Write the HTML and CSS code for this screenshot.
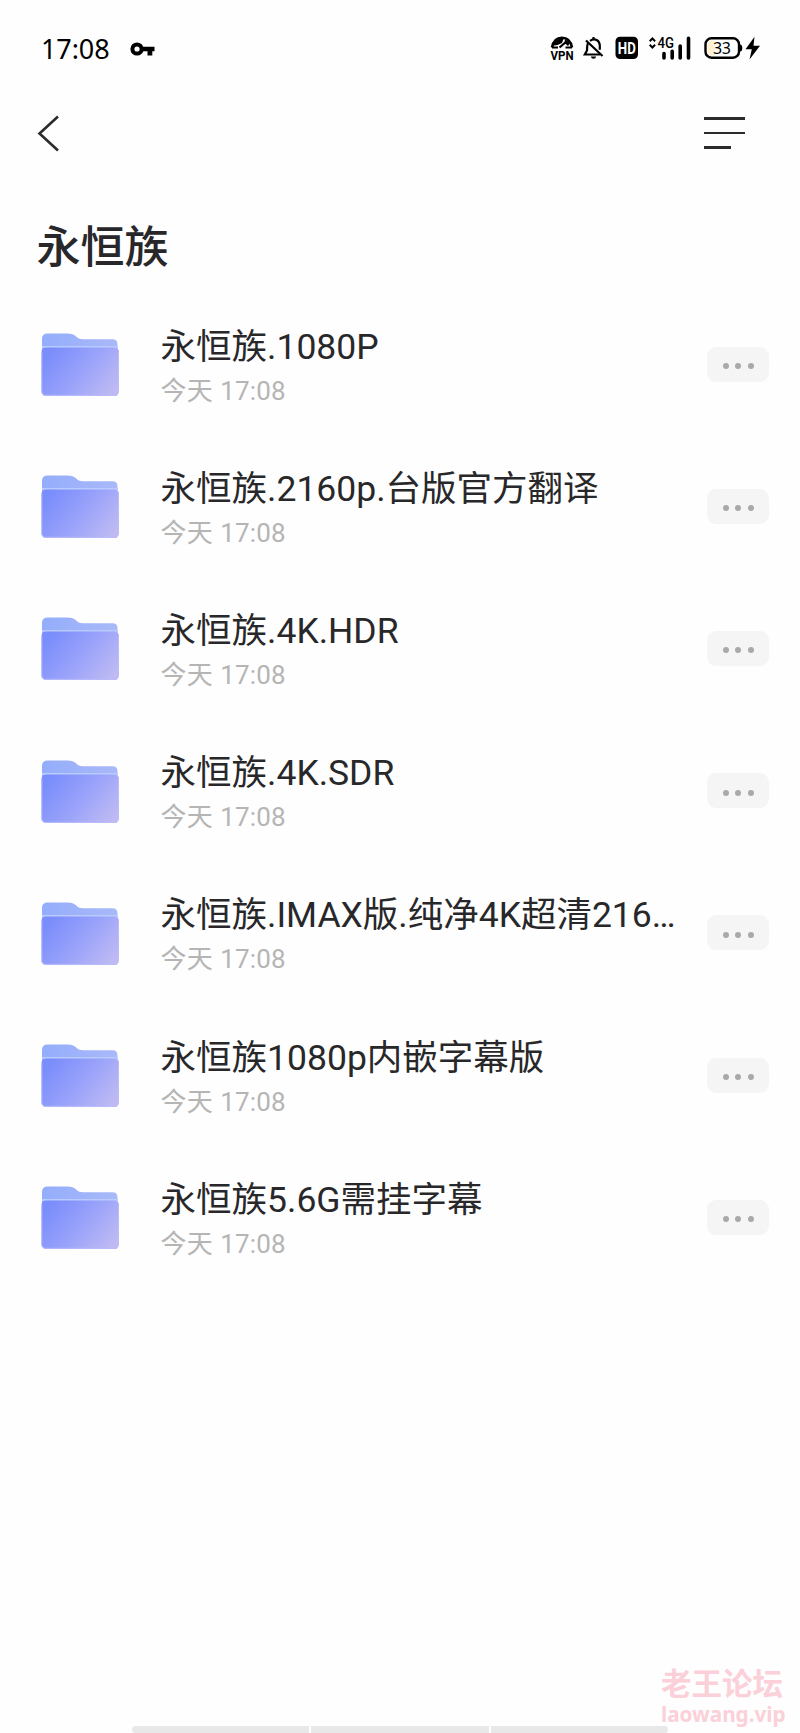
FILE: index.html
```html
<!DOCTYPE html>
<html lang="zh-CN">
  <head>
    <meta charset="UTF-8" />
    <title>永恒族</title>
    <link rel="stylesheet" href="styles.css">
  </head>
  <body>
    <!-- shared folder icon -->
    <svg class="defs" width="0" height="0">
      <defs>
        <linearGradient id="back" x1="0" y1="0" x2="1" y2="0">
          <stop offset="0" stop-color="#94adfb" />
          <stop offset="1" stop-color="#a9b9f9" />
        </linearGradient>
        <linearGradient id="front" x1="0" y1="0.3" x2="1" y2="0.8">
          <stop offset="0" stop-color="#7a8dfc" />
          <stop offset="0.5" stop-color="#9aa3fa" />
          <stop offset="1" stop-color="#bfbaf3" />
        </linearGradient>
        <symbol id="folder" viewBox="0 0 80 66">
          <path d="M2 7q0-5.500 5.500-5.500h20c4 0 6.500 1 9 3.200 2 1.800 3.500 2.500 6.500 2.500h29.500q5 0 5 5V50H2z" fill="url(#back)" />
          <rect x="2" y="14" width="76" height="2" fill="#b9caff" />
          <rect x="1.500" y="15.500" width="77.500" height="48.500" rx="4.500" fill="url(#front)" />
          <path d="M4 63q-2-.8-2.200-3v-40M4 63.300h73M78.500 20v40" fill="none" stroke="#b9bcfb" stroke-width="1" />
        </symbol>
      </defs>
    </svg>

    <div class="status-bar">
      <span class="clock">17:08</span>
      <svg class="key" width="26" height="16" viewBox="0 0 26 16">
        <circle cx="7" cy="8" r="4.600" fill="none" stroke="#000" stroke-width="4" />
        <path d="M12 5.800h12.500v4.400h-2.200v4.300h-4.800v-4.300H12z" />
      </svg>
      <svg class="status-icons" width="212" height="30" viewBox="0 0 212 30">
        <!-- vpn -->
        <path d="M2 13.500C3.500 6 7.500 3.800 12 3.800S20.500 6 22 13.500" fill="none" stroke="#000" stroke-width="2.600" />
        <path d="M3 9.500l7-5.500 3.500 1-1.500 4-4.500 2-3.500.5zM15 5l5 4-2 3-3.500-3z" />
        <path d="M2 13.500h6M15.500 13.500h6.500" stroke="#000" stroke-width="2" />
        <path d="M9.500 13.500l7-6" stroke="#000" stroke-width="2.300" />
        <text x="12" y="25.500" class="vpn-text" textLength="23" lengthAdjust="spacingAndGlyphs">VPN</text>
        <!-- muted bell -->
        <g fill="none" stroke="#000" stroke-width="2.200">
          <path d="M38.500 8.500C36.800 10.200 37.200 14 37 16.500L34.800 20.500H50M40 6.800c5-3.500 9.500 0 9.800 4.500v4.500" />
          <path d="M36 6.500L52.500 22M43.500 3v2.500" />
        </g>
        <path d="M40.800 22.500h5.400q-.6 2.300-2.700 2.300t-2.700-2.300z" />
        <!-- hd -->
        <rect x="65.500" y="2.800" width="22.500" height="22.200" rx="4.500" />
        <text x="76.800" y="19.600" class="hd-text" textLength="18" lengthAdjust="spacingAndGlyphs">HD</text>
        <!-- signal -->
        <path d="M99.700 7.200l2.700-2.700 2.700 2.700M99.700 10.800l2.700 2.700 2.700-2.700" fill="none" stroke="#000" stroke-width="2" />
        <text x="115.800" y="14" class="net-text" textLength="16.500" lengthAdjust="spacingAndGlyphs">4G</text>
        <path d="M114 19.500v4.500M122.200 17.300v6.700M130.200 12v12M138.500 4.300v19.700" fill="none" stroke="#000" stroke-width="3.600" stroke-linecap="round" />
        <!-- battery -->
        <rect x="155.500" y="4.300" width="33.500" height="19.400" rx="6" fill="#fff" stroke="#000" stroke-width="2.400" />
        <path d="M162 6.500q-4.300 0-4.300 4.300v6.400q0 4.300 4.300 4.300h3v-15z" fill="#fff1d2" />
        <path d="M190 10.500q2.300 0 2.300 3.500t-2.300 3.500z" />
        <text x="172" y="19.700" class="battery-text" textLength="18">33</text>
        <path d="M204.500 2.800L195.500 15.300h6.300L199.500 25.500 210 11.700h-6.500z" />
      </svg>
    </div>

    <div class="nav-bar">
      <svg width="24" height="38" viewBox="0 0 24 38">
        <path d="M22 2.500L3.500 19.500 22 36.500" fill="none" stroke="#2b2b2d" stroke-width="2.600" />
      </svg>
      <div class="menu">
        <span></span>
        <span></span>
        <span class="short"></span>
      </div>
    </div>

    <h1>永恒族</h1>

    <div class="file-list">
      <div class="file-row">
        <svg class="folder"><use href="#folder" /></svg>
        <div class="info">
          <div class="name">永恒族.1080P</div>
          <div class="time">今天 17:08</div>
        </div>
        <div class="more"><i></i><i></i><i></i></div>
      </div>
      <div class="file-row">
        <svg class="folder"><use href="#folder" /></svg>
        <div class="info">
          <div class="name">永恒族.2160p.台版官方翻译</div>
          <div class="time">今天 17:08</div>
        </div>
        <div class="more"><i></i><i></i><i></i></div>
      </div>
      <div class="file-row">
        <svg class="folder"><use href="#folder" /></svg>
        <div class="info">
          <div class="name">永恒族.4K.HDR</div>
          <div class="time">今天 17:08</div>
        </div>
        <div class="more"><i></i><i></i><i></i></div>
      </div>
      <div class="file-row">
        <svg class="folder"><use href="#folder" /></svg>
        <div class="info">
          <div class="name">永恒族.4K.SDR</div>
          <div class="time">今天 17:08</div>
        </div>
        <div class="more"><i></i><i></i><i></i></div>
      </div>
      <div class="file-row">
        <svg class="folder"><use href="#folder" /></svg>
        <div class="info">
          <div class="name">永恒族.IMAX版.纯净4K超清216…</div>
          <div class="time">今天 17:08</div>
        </div>
        <div class="more"><i></i><i></i><i></i></div>
      </div>
      <div class="file-row">
        <svg class="folder"><use href="#folder" /></svg>
        <div class="info">
          <div class="name">永恒族1080p内嵌字幕版</div>
          <div class="time">今天 17:08</div>
        </div>
        <div class="more"><i></i><i></i><i></i></div>
      </div>
      <div class="file-row">
        <svg class="folder"><use href="#folder" /></svg>
        <div class="info">
          <div class="name">永恒族5.6G需挂字幕</div>
          <div class="time">今天 17:08</div>
        </div>
        <div class="more"><i></i><i></i><i></i></div>
      </div>
    </div>

    <div class="gesture-bar">
      <span></span>
      <span></span>
      <span></span>
    </div>

    <div class="watermark">
      <div class="site-name">老王论坛</div>
      <div class="site-url">laowang.vip</div>
    </div>
  </body>
</html>
```
FILE: styles.css
```css
* {
  box-sizing: border-box;
}

body {
  margin: 0;
  position: relative;
  width: 800px;
  height: 1733px;
  display: flex;
  flex-direction: column;
  overflow: hidden;
  background: #fefefe;
  color: #28282a;
  font-family: Roboto, "Noto Sans CJK SC", sans-serif;
}

svg {
  display: block;
}

.defs {
  position: absolute;
}

.status-bar {
  height: 98px;
  padding: 0 38px 0 41px;
  display: flex;
  align-items: center;
  color: #000;
}

.clock {
  font-family: "Noto Sans", sans-serif;
  font-size: 27px;
  line-height: 38px;
  letter-spacing: -0.1px;
}

.key {
  margin-left: 20px;
}

.status-icons {
  margin-left: auto;
}

.status-icons text {
  font-family: Roboto, sans-serif;
  text-anchor: middle;
}

.status-icons .vpn-text {
  font-size: 13.5px;
  font-weight: 700;
}

.status-icons .hd-text {
  font-size: 16.5px;
  font-weight: 700;
  fill: #fff;
}

.status-icons .net-text {
  font-size: 15px;
  font-weight: 500;
}

.status-icons .battery-text {
  font-family: "Noto Sans", sans-serif;
  font-size: 16px;
}

.nav-bar {
  height: 70px;
  padding: 0 55px 0 36px;
  display: flex;
  align-items: center;
  justify-content: space-between;
}

.menu {
  display: flex;
  flex-direction: column;
  gap: 12px;
}

.menu span {
  width: 41px;
  height: 2.5px;
  background: #2b2b2d;
}

.menu .short {
  width: 27px;
}

h1 {
  margin: 48px 0 0 36.5px;
  font-size: 44px;
  font-weight: 500;
  line-height: 64px;
}

.file-list {
  flex: 1;
  padding-top: 13px;
}

.file-row {
  height: 142.2px;
  padding: 0 31px 0 40px;
  display: flex;
  align-items: center;
}

.folder {
  width: 80px;
  height: 66px;
  margin-top: 2px;
}

.info {
  flex: 1;
  margin-left: 40.6px;
  padding-top: 5px;
  white-space: nowrap;
}

.name {
  font-size: 35.5px;
  line-height: 48px;
}

.time {
  font-size: 26px;
  line-height: 40px;
  letter-spacing: 0.1px;
  word-spacing: 1px;
  color: #b5b5b5;
}

.more {
  width: 62px;
  height: 35px;
  border-radius: 9px;
  display: flex;
  align-items: center;
  justify-content: center;
  gap: 6.5px;
  padding-top: 4px;
  background: #f5f5f5;
}

.more i {
  width: 6px;
  height: 6px;
  border-radius: 50%;
  background: #a9a9a9;
}

.gesture-bar {
  width: 536px;
  height: 7px;
  margin-left: 132px;
  display: flex;
  gap: 2px;
  border-radius: 4px;
  overflow: hidden;
}

.gesture-bar span {
  flex: 1;
  background: #e8e8e8;
}

.watermark {
  position: absolute;
  right: 15px;
  bottom: 3px;
  width: 124px;
  color: #fbd0d8;
  font-weight: 700;
}

.site-name {
  font-size: 30.5px;
  line-height: 34px;
  padding-top: 4px;
  margin-bottom: -4px;
}

.site-url {
  font-family: "Noto Sans", sans-serif;
  font-size: 20.7px;
  line-height: 32px;
}
```
